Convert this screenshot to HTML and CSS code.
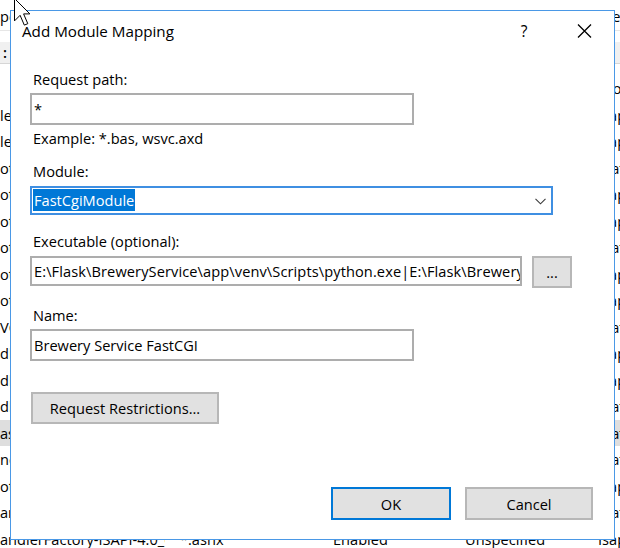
FILE: index.html
```html
<!DOCTYPE html>
<html>
<head>
<meta charset="utf-8">
<title>Add Module Mapping</title>
<link rel="stylesheet" href="styles.css">
</head>
<body>
<div class="screen">
  <div class="bg">
    <div class="bg-desc">pecify the resources, such as DLLs and managed code, that handle responses for specific request types.</div>
    <div class="bg-head"><span class="bg-head-text">:</span></div>
    <div class="bg-rows">
      <div class="row"><span class="c1"></span><span class="c2">*.axd</span><span class="c3">Enabled</span><span class="c4">Unspecified</span><span class="c5">ProtocolSupportModule</span></div>
      <div class="row"><span class="c1">leHandler-Integrated-4.0</span><span class="c2">*.cshtm</span><span class="c3">Enabled</span><span class="c4">Unspecified</span><span class="c5">IsapiModule</span></div>
      <div class="row"><span class="c1">leHandler-ISAPI-4.0_64bit</span><span class="c2">*.cshtml</span><span class="c3">Enabled</span><span class="c4">Unspecified</span><span class="c5">IsapiModule</span></div>
      <div class="row"><span class="c1">otocolSupport-ISAPI</span><span class="c2">*.rem</span><span class="c3">Enabled</span><span class="c4">Unspecified</span><span class="c5">StaticFileModule</span></div>
      <div class="row"><span class="c1">otocolSupport-4.0</span><span class="c2">*.rem</span><span class="c3">Enabled</span><span class="c4">Unspecified</span><span class="c5">IsapiModule</span></div>
      <div class="row"><span class="c1">otocolSupport-64</span><span class="c2">*.soap</span><span class="c3">Enabled</span><span class="c4">Unspecified</span><span class="c5">IsapiModule</span></div>
      <div class="row"><span class="c1">otHandler-Integrated</span><span class="c2">*.soap</span><span class="c3">Enabled</span><span class="c4">Unspecified</span><span class="c5">StaticFileModule</span></div>
      <div class="row"><span class="c1">otHandler-ISAPI-4.0</span><span class="c2">*.xoml</span><span class="c3">Enabled</span><span class="c4">Unspecified</span><span class="c5">IsapiModule</span></div>
      <div class="row"><span class="c1">otHandler-ISAPI-64</span><span class="c2">*.xoml</span><span class="c3">Enabled</span><span class="c4">Unspecified</span><span class="c5">IsapiModule</span></div>
      <div class="row"><span class="c1">VCHandler-Integrated</span><span class="c2">*.svc</span><span class="c3">Enabled</span><span class="c4">Unspecified</span><span class="c5">StaticFileModule</span></div>
      <div class="row"><span class="c1">dlerFactory-Integrated</span><span class="c2">*.rules</span><span class="c3">Enabled</span><span class="c4">Unspecified</span><span class="c5">IsapiModule</span></div>
      <div class="row"><span class="c1">dlerFactory-ISAPI-4.0</span><span class="c2">*.rules</span><span class="c3">Enabled</span><span class="c4">Unspecified</span><span class="c5">IsapiModule</span></div>
      <div class="row"><span class="c1">dlerFactory-ISAPI-64</span><span class="c2">*.xamlx</span><span class="c3">Enabled</span><span class="c4">Unspecified</span><span class="c5">StaticFileModule</span></div>
      <div class="row sel"><span class="c1">aspx-Integrated-4.0</span><span class="c2">*.aspx</span><span class="c3">Enabled</span><span class="c4">Unspecified</span><span class="c5">StaticFileModule</span></div>
      <div class="row"><span class="c1">ncHandler-ISAPI-4.0</span><span class="c2">*.asmx</span><span class="c3">Enabled</span><span class="c4">Unspecified</span><span class="c5">StaticFileModule</span></div>
      <div class="row"><span class="c1">otHandler-ISAPI-64</span><span class="c2">*.asmx</span><span class="c3">Enabled</span><span class="c4">Unspecified</span><span class="c5">IsapiModule</span></div>
      <div class="row"><span class="c1">arePageHandler-4.0</span><span class="c2">*.ashx</span><span class="c3">Enabled</span><span class="c4">Unspecified</span><span class="c5">StaticFileModule</span></div>
      <div class="row"><span class="c1">andlerFactory-ISAPI-4.0_64bit</span><span class="c2">*.ashx</span><span class="c3">Enabled</span><span class="c4">Unspecified</span><span class="c5">IsapiModule</span></div>
    </div>
  </div>

  <div class="dialog">
    <div class="titlebar">
      <span class="title">Add Module Mapping</span>
      <span class="tb-btn help">?</span>
      <span class="tb-btn close">
        <svg width="15" height="14" viewBox="0 0 15 14"><path d="M1 0.5 L14 13.5 M14 0.5 L1 13.5" stroke="#000" stroke-width="1.3" fill="none"/></svg>
      </span>
    </div>
    <div class="dlg-body">
      <div class="lbl lbl-path">Request path:</div>
      <div class="field field-path">*</div>
      <div class="lbl hint">Example: *.bas, wsvc.axd</div>
      <div class="lbl lbl-module">Module:</div>
      <div class="select">
        <span class="sel-text">FastCgiModule</span>
        <svg class="chev" width="11" height="7" viewBox="0 0 11 7"><polyline points="0.5,0.8 5.5,5.8 10.5,0.8" stroke="#3a3a3a" stroke-width="1.1" fill="none"/></svg>
      </div>
      <div class="lbl lbl-exec">Executable (optional):</div>
      <div class="exec-row">
        <div class="field field-exec"><span class="exec-text">E:\Flask\BreweryService\app\venv\Scripts\python.exe|E:\Flask\BreweryService\app\venv\Lib\site-packages\wfastcgi.py</span></div>
        <button class="btn btn-browse">...</button>
      </div>
      <div class="lbl lbl-name">Name:</div>
      <div class="field field-name">Brewery Service FastCGI</div>
      <button class="btn btn-restrict">Request Restrictions...</button>
      <div class="actions">
        <button class="btn btn-ok">OK</button>
        <button class="btn btn-cancel">Cancel</button>
      </div>
    </div>
  </div>

  <svg class="cursor" width="18" height="29" viewBox="0 0 18 29"><path d="M0.5 0.5 L0.5 22.9 L6.1 17.3 L10.3 27.1 L13.8 25.7 L9.6 15.9 L15.9 15.9 Z" fill="#fff" stroke="#000" stroke-width="1"/></svg>
</div>
</body>
</html>
```

FILE: styles.css
```css
html, body {
  margin: 0;
  padding: 0;
}

body {
  font-family: "Open Sans", "Noto Sans", "DejaVu Sans", sans-serif;
  font-size: 14.6px;
  color: #000;
  background: #fff;
}

.screen {
  position: relative;
  width: 620px;
  height: 548px;
  overflow: hidden;
  background: #fff;
}

/* ---------- background list (IIS handler mappings) ---------- */
.bg-desc {
  height: 31px;
  box-sizing: border-box;
  padding-top: 5.5px;
  line-height: 20px;
  white-space: nowrap;
  overflow: hidden;
  border-bottom: 1px solid #e6e6e6;
}

.bg-head {
  margin-top: 11px;
  height: 21px;
  background: #f0f0f0;
  border-bottom: 1px solid #d6d6d6;
  line-height: 21px;
}

.bg-head-text {
  padding-left: 3px;
  font-weight: 600;
}

.bg-rows {
  margin-top: 11px;
}

.row {
  display: grid;
  grid-template-columns: 165px 168px 132px 133px 1fr;
  height: 26.5px;
  line-height: 26.5px;
  white-space: nowrap;
}

.row.sel {
  background: #dedede;
}

.row span {
  overflow: hidden;
}

.row .c2 {
  padding-left: 15px;
}

/* ---------- dialog ---------- */
.dialog {
  position: absolute;
  left: 10px;
  top: 10px;
  width: 605px;
  height: 530px;
  box-sizing: border-box;
  border: 1px solid #4a98e6;
  background: #fff;
  display: flex;
  flex-direction: column;
}

.titlebar {
  display: flex;
  align-items: center;
  height: 40px;
  flex: none;
}

.title {
  flex: 1;
  padding-left: 11px;
  font-size: 15.2px;
  line-height: 40px;
}

.tb-btn {
  width: 60px;
  height: 40px;
  display: flex;
  align-items: center;
  justify-content: center;
}

.help {
  font-size: 15.5px;
}

.dlg-body {
  display: flex;
  flex-direction: column;
  align-items: flex-start;
  padding: 0 21px 0 19px;
}

.lbl {
  line-height: 20px;
  padding-left: 3px;
}

.lbl-path { margin-top: 18px; }
.hint { margin-top: 3px; }
.lbl-module { margin-top: 13px; }
.lbl-exec { margin-top: 16px; }
.lbl-name { margin-top: 17px; }

.field {
  box-sizing: border-box;
  border: 2px solid #adadad;
  height: 32px;
  line-height: 28px;
  padding-left: 2px;
  white-space: nowrap;
  overflow: hidden;
  background: #fff;
}

.field-path {
  width: 384px;
  margin-top: 4px;
}

.field-name {
  width: 384px;
  margin-top: 4px;
}

.select {
  margin-top: 5px;
  box-sizing: border-box;
  width: 523px;
  height: 29px;
  border: 2px solid #3f8fe2;
  padding: 1px;
  display: flex;
  align-items: flex-start;
}

.sel-text {
  background: #0078d7;
  color: #fff;
  line-height: 22px;
  padding: 0 1px;
}

.chev {
  margin-left: auto;
  margin-right: 4px;
  margin-top: 9px;
}

.exec-row {
  margin-top: 5px;
  display: flex;
  align-items: flex-start;
  gap: 10px;
}

.field-exec {
  width: 492px;
  height: 30px;
  line-height: 26px;
}

.exec-text {
  letter-spacing: 0.1px;
}

.btn {
  box-sizing: border-box;
  font-family: inherit;
  font-size: 14.6px;
  color: #000;
  background: #e1e1e1;
  border: 2px solid #b7b7b7;
  padding: 0;
  margin: 0;
  text-align: center;
}

.btn-browse {
  width: 40px;
  height: 32px;
  line-height: 26px;
}

.btn-restrict {
  margin-top: 31px;
  margin-left: 1px;
  width: 188px;
  height: 32px;
}

.actions {
  margin-top: 63px;
  align-self: stretch;
  display: flex;
  justify-content: flex-end;
  gap: 14px;
}

.btn-ok {
  width: 120px;
  height: 33px;
  border-color: #0078d7;
}

.btn-cancel {
  width: 128px;
  height: 33px;
}

/* ---------- mouse pointer ---------- */
.cursor {
  position: absolute;
  left: 14px;
  top: -2px;
}
```
